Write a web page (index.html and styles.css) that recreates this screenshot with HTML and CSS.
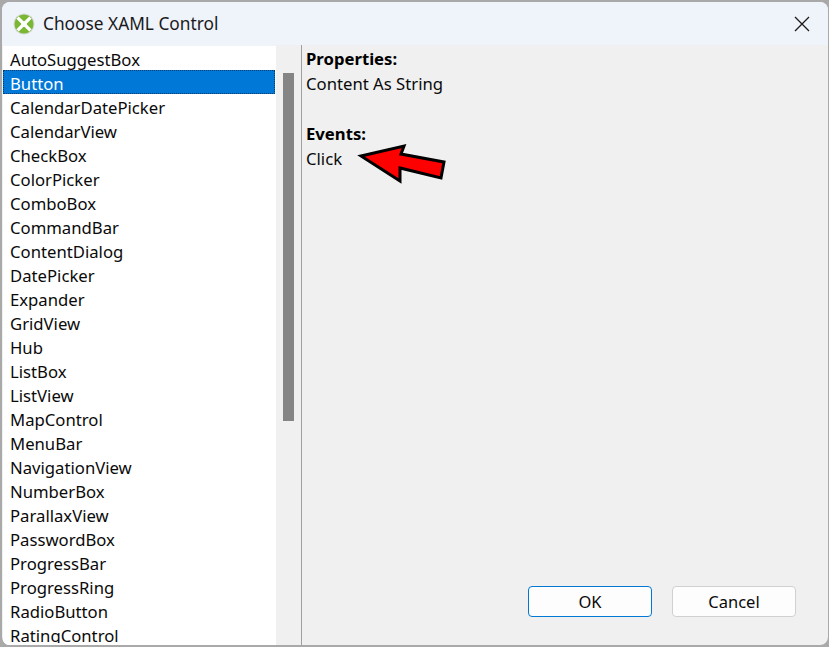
FILE: index.html
```html
<!DOCTYPE html>
<html lang="en">
<head>
<meta charset="utf-8">
<title>Choose XAML Control</title>
<link rel="stylesheet" href="styles.css">
</head>
<body>
<div class="window">
  <header class="titlebar">
    <svg class="app-icon" width="22" height="22" viewBox="0 0 22 22">
      <circle cx="11" cy="11" r="10.5" fill="#d4d8d4"/>
      <circle cx="11" cy="11" r="9.5" fill="#7ab733"/>
      <path d="M4.6 4.6 L17.4 17.4 M17.4 4.6 L4.6 17.4" stroke="#fff" stroke-width="3.4" fill="none"/>
      <circle cx="11" cy="11" r="2.6" fill="#fff"/>
    </svg>
    <span class="title">Choose XAML Control</span>
    <svg class="close" width="16" height="16" viewBox="0 0 16 16">
      <path d="M1 1 L15 15 M15 1 L1 15" stroke="#1a1a1a" stroke-width="1.3" fill="none"/>
    </svg>
  </header>
  <div class="content">
    <div class="list-pane">
      <ul class="list">
        <li>AutoSuggestBox</li>
        <li class="selected">Button</li>
        <li>CalendarDatePicker</li>
        <li>CalendarView</li>
        <li>CheckBox</li>
        <li>ColorPicker</li>
        <li>ComboBox</li>
        <li>CommandBar</li>
        <li>ContentDialog</li>
        <li>DatePicker</li>
        <li>Expander</li>
        <li>GridView</li>
        <li>Hub</li>
        <li>ListBox</li>
        <li>ListView</li>
        <li>MapControl</li>
        <li>MenuBar</li>
        <li>NavigationView</li>
        <li>NumberBox</li>
        <li>ParallaxView</li>
        <li>PasswordBox</li>
        <li>ProgressBar</li>
        <li>ProgressRing</li>
        <li>RadioButton</li>
        <li>RatingControl</li>
      </ul>
      <div class="scrollbar"><div class="thumb"></div></div>
    </div>
    <div class="details">
      <div class="info">
        <div class="heading">Properties:</div>
        <div class="line">Content As String</div>
        <div class="line"></div>
        <div class="heading">Events:</div>
        <div class="line">Click</div>
      </div>
      <svg class="arrow" width="92" height="44" viewBox="0 0 92 44">
        <path d="M5 16 L48 6 L45 14 L88 22 L85 38 L44 28 L44 41Z" fill="#ff0000" stroke="#000" stroke-width="3" stroke-linejoin="miter"/>
      </svg>
      <div class="actions">
        <button class="btn btn-default">OK</button>
        <button class="btn">Cancel</button>
      </div>
    </div>
  </div>
</div>
</body>
</html>
```
FILE: styles.css
```css
* { box-sizing: border-box; }
html, body { margin: 0; height: 100%; }
body {
  background: #a9a9a9;
  padding: 2px 1px 2px 2px;
  overflow: hidden;
  font-family: "Noto Sans", "Open Sans", sans-serif;
  font-size: 16.7px;
  color: #0a0a0a;
}
.window {
  height: 100%;
  border-radius: 8px;
  overflow: hidden;
  background: #f0f0f0;
  display: flex;
  flex-direction: column;
}
.titlebar {
  flex: 0 0 43px;
  background: #eff3fa;
  display: flex;
  align-items: center;
  padding: 0 18px 0 11px;
}
.app-icon { margin-right: 8px; }
.title { flex: 1; font-size: 17.3px; color: #1a1a1a; }
.content { flex: 1; display: flex; min-height: 0; }
.list-pane {
  flex: 0 0 300px;
  display: flex;
  border-right: 1px solid #a0a0a0;
  padding-left: 1px;
  min-height: 0;
}
.list {
  flex: 0 0 273px;
  margin: 0;
  padding: 0;
  list-style: none;
  background: #fff;
  border-top: 1px solid #eff3fa;
  border-bottom: 2px solid #fff;
  overflow: hidden;
}
.list li {
  height: 24px;
  line-height: 28px;
  padding-left: 7px;
  white-space: nowrap;
  width: 272px;
}
.list li.selected {
  background: #0078d7;
  color: #fff;
  outline: 1px dotted #003c6c;
  outline-offset: -1px;
}
.scrollbar { flex: 1; padding: 28px 7px 0; }
.thumb { width: 11px; height: 348px; background: #858585; }
.details {
  flex: 1;
  position: relative;
  display: flex;
  flex-direction: column;
  padding: 1px 32px 28px 4px;
  min-height: 0;
}
.info { flex: 1; }
.heading { font-size: 16.7px; font-weight: 700; height: 25px; line-height: 25px; color: #000; }
.line { height: 25px; line-height: 25px; }
.arrow { position: absolute; left: 54px; top: 95px; }
.actions { display: flex; justify-content: flex-end; gap: 20px; }
.btn {
  width: 124px;
  height: 31px;
  background: #fdfdfd;
  border: 1px solid #d0d0d0;
  border-radius: 4px;
  font: inherit;
  font-size: 16.5px;
  color: #0a0a0a;
  padding: 0;
}
.btn-default { border-color: #0078d4; }
```
